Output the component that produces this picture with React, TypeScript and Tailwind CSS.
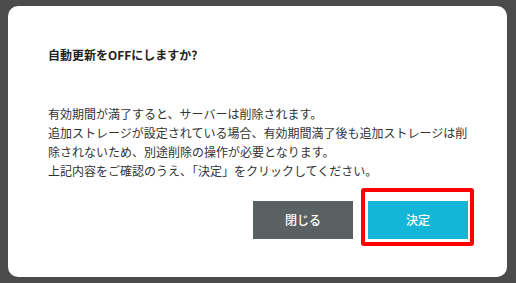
import React from "react";

export default function App() {
  const font = { fontFamily: '"Noto Sans CJK JP", "Noto Sans", sans-serif' };
  return (
    <div className="w-[516px] h-[283px] bg-[#4b4b4b] overflow-hidden pt-[6px] pl-[8px]" style={font}>
      <div className="w-[499px] h-[271px] bg-white rounded-[10px] px-[40px] pt-[40px]">
        <h2 className="text-[12px] leading-[18px] font-bold text-[#222]">自動更新をOFFにしますか?</h2>
        <div className="mt-[40px] text-[12px] leading-[19px] text-[#333] w-[420px]">
          <p>有効期間が満了すると、サーバーは削除されます。</p>
          <p>追加ストレージが設定されている場合、有効期間満了後も追加ストレージは削除されないため、別途削除の操作が必要となります。</p>
          <p>上記内容をご確認のうえ、「決定」をクリックしてください。</p>
        </div>
        <div className="mt-[21px] flex justify-end gap-[15px] w-[420px]">
          <button className="w-[100px] h-[38px] bg-[#5a6162] text-white text-[12px] font-medium">閉じる</button>
          <div className="relative">
            <div className="absolute left-[-7px] right-[-6px] top-[-13px] bottom-[-7px] border-4 border-[#ff0000] rounded-[3px]"></div>
            <button className="relative w-[100px] h-[38px] bg-[#13b6d7] text-white text-[12px] font-medium">決定</button>
          </div>
        </div>
      </div>
    </div>
  );
}
